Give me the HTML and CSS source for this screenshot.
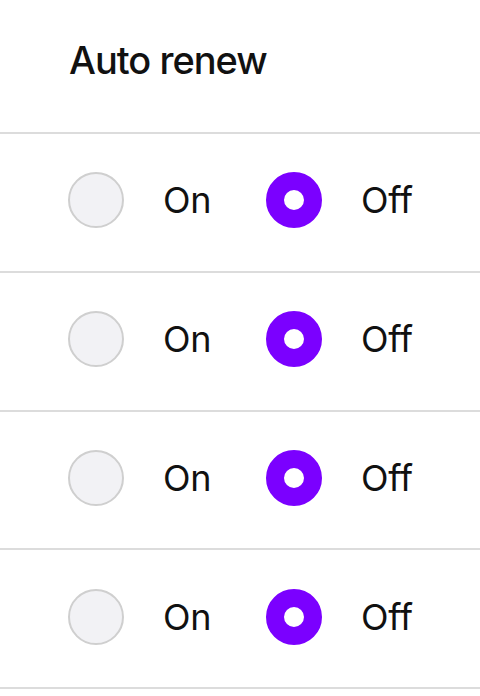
FILE: index.html
```html
<!DOCTYPE html>
<html lang="en">
<head>
  <meta charset="UTF-8">
  <title>Auto renew</title>
  <link rel="stylesheet" href="styles.css">
</head>
<body>
  <div class="header">Auto renew</div>

  <div class="row">
    <label class="option"><span class="radio"></span>On</label>
    <label class="option"><span class="radio checked"></span>Off</label>
  </div>
  <div class="row">
    <label class="option"><span class="radio"></span>On</label>
    <label class="option"><span class="radio checked"></span>Off</label>
  </div>
  <div class="row">
    <label class="option"><span class="radio"></span>On</label>
    <label class="option"><span class="radio checked"></span>Off</label>
  </div>
  <div class="row">
    <label class="option"><span class="radio"></span>On</label>
    <label class="option"><span class="radio checked"></span>Off</label>
  </div>
</body>
</html>
```

FILE: styles.css
```css
body {
  margin: 0;
  font-family: Inter, "Liberation Sans", sans-serif;
  background: #fff;
  color: #111;
}
.header {
  height: 134px;
  box-sizing: border-box;
  padding: 35px 0 0 69px;
  font-size: 38px;
  font-weight: 500;
  letter-spacing: -1px;
  line-height: 50px;
  border-bottom: 2px solid #dcdcdc;
}
.row {
  height: 138.75px;
  box-sizing: border-box;
  padding: 0 0 4px 68px;
  display: flex;
  align-items: center;
  gap: 55px;
  border-bottom: 2px solid #dcdcdc;
}
.option {
  display: flex;
  align-items: center;
  gap: 39px;
  font-size: 36px;
  letter-spacing: -0.4px;
}
.radio {
  width: 56px;
  height: 56px;
  box-sizing: border-box;
  border-radius: 50%;
  border: 2px solid #cfcfcf;
  background: #f2f2f5;
}
.radio.checked {
  border: 18px solid #7b00ff;
  background: #fff;
}
```
